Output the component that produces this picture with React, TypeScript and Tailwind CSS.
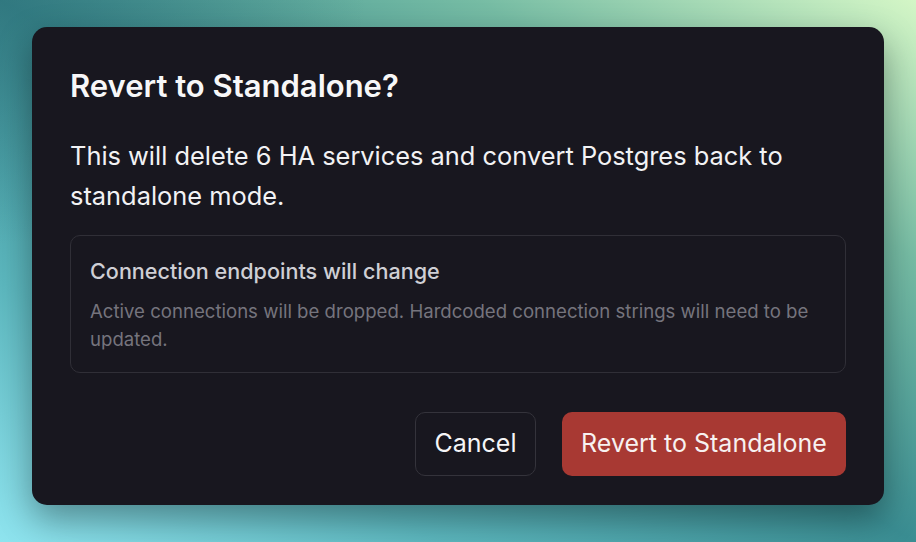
import React from "react";

export default function App() {
  return (
    <div
      className="w-full h-screen overflow-hidden flex justify-center pt-[27px] bg-[radial-gradient(ellipse_40%_45%_at_0%_0%,rgba(40,100,110,0.5)_0%,transparent_100%),linear-gradient(to_top_right,#8fe4ef_0%,#5cb7be_24%,#3a8d92_50%,#76bca4_76%,#d4f6c6_100%)]"
      style={{ fontFamily: "Inter, 'Noto Sans', sans-serif" }}
    >
      <div className="w-[852px] h-[478px] rounded-[15px] bg-[#18171f] px-[38px] pt-[40px] pb-[29px] flex flex-col shadow-[0_14px_34px_rgba(0,0,0,0.35)]">
        <h2 className="text-[31px] leading-[38px] font-semibold text-[#f7f7f8]">
          Revert to Standalone?
        </h2>
        <p className="mt-[31px] text-[25.4px] leading-[40px] text-[#f2f2f4]">
          This will delete 6 HA services and convert Postgres back to standalone mode.
        </p>
        <div className="mt-[19px] rounded-[10px] border border-[#302f37] px-[19px] pt-[20px] pb-[19px]">
          <div className="text-[21.6px] leading-[30px] font-medium text-[#cfcfd5]">
            Connection endpoints will change
          </div>
          <div className="mt-[11px] text-[18.6px] leading-[28px] text-[#75747d]">
            Active connections will be dropped. Hardcoded connection strings will need to be updated.
          </div>
        </div>
        <div className="mt-auto flex justify-end gap-[26px]">
          <button className="h-[64px] w-[121px] rounded-[10px] border border-[#34333b] bg-[#18171f] text-[25px] text-[#f5f5f7]">
            Cancel
          </button>
          <button className="h-[64px] w-[284px] rounded-[10px] bg-[#a83933] text-[25px] text-[#f7f1f0]">
            Revert to Standalone
          </button>
        </div>
      </div>
    </div>
  );
}
